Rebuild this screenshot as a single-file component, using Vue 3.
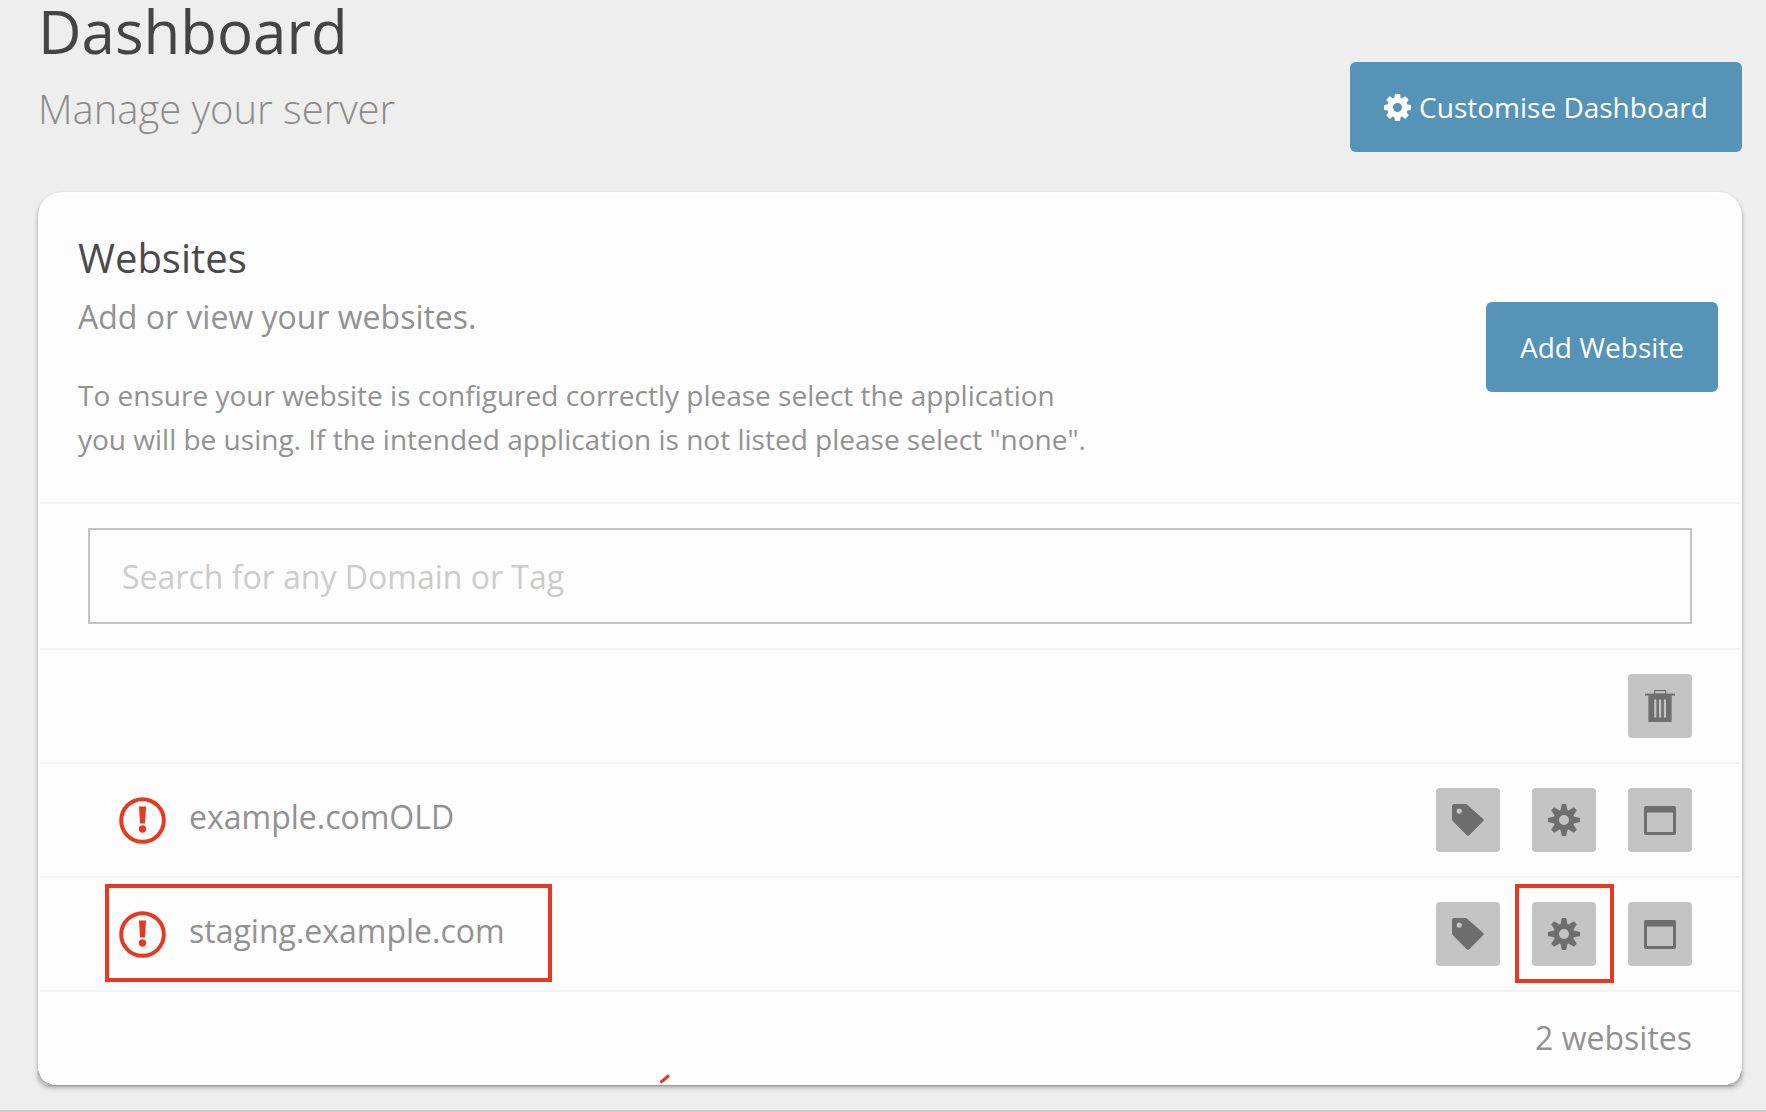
<script setup>
const sites = [
  { name: 'example.comOLD', flagged: false },
  { name: 'staging.example.com', flagged: true },
]
const teeth = [0, 45, 90, 135, 180, 225, 270, 315]
const cog = 'M1024 768q0-106-75-181t-181-75-181 75-75 181 75 181 181 75 181-75 75-181zm512-109v222q0 12-8 23t-20 13l-185 28q-19 54-39 91 35 50 107 138 10 12 10 25t-9 23q-27 37-99 108t-94 71q-12 0-26-9l-138-108q-44 23-91 38-16 136-29 186-7 28-36 28h-222q-14 0-24.500-8.500t-11.500-21.500l-28-184q-49-16-90-37l-141 107q-10 9-25 9-14 0-25-11-126-114-165-168-7-10-7-23 0-12 8-23 15-21 51-66.500t54-70.500q-27-50-41-99l-183-27q-13-2-21-12.500t-8-23.500v-222q0-12 8-23t19-13l186-28q14-46 39-92-40-57-107-138-10-12-10-24 0-10 9-23 26-36 98.500-107.500t94.500-71.500q13 0 26 10l138 107q44-23 91-38 16-136 29-186 7-28 36-28h222q14 0 24.500 8.500t11.500 21.500l28 184q49 16 90 37l142-107q9-9 24-9 13 0 25 10 129 119 165 170 7 8 7 22 0 12-8 23-15 21-51 66.500t-54 70.500q26 50 41 98l183 28q13 2 21 12.500t8 23.500z'
</script>

<template>
  <div class="page">
    <header class="top">
      <div>
        <h1 class="title">Dashboard</h1>
        <p class="subtitle">Manage your server</p>
      </div>
      <button class="btn customise">
        <svg class="cog" viewBox="0 0 1536 1536"><path :d="cog" fill="#fff" /></svg>
        Customise Dashboard
      </button>
    </header>

    <section class="card">
      <div class="head">
        <div>
          <h2 class="card-title">Websites</h2>
          <p class="lead">Add or view your websites.</p>
          <p class="note">To ensure your website is configured correctly please select the application<br />you will be using. If the intended application is not listed please select "none".</p>
        </div>
        <button class="btn add">Add Website</button>
      </div>

      <div class="search-row">
        <input class="search" type="text" placeholder="Search for any Domain or Tag" />
      </div>

      <div class="row tools">
        <button class="icon-btn" aria-label="Delete">
          <svg width="30" height="32" viewBox="0 0 30 32">
            <rect x="0" y="3.600" width="30" height="2" fill="#6e6e6e" />
            <rect x="9.600" y="0.600" width="11" height="3.600" fill="none" stroke="#6e6e6e" stroke-width="1.200" />
            <path d="M3.400 5h23.200v26.400a.6.6 0 0 1-.6.6H4a.6.6 0 0 1-.6-.6z" fill="#6e6e6e" />
            <rect x="9.200" y="9.500" width="2.200" height="18" fill="#c4c4c4" />
            <rect x="14" y="9.500" width="2.200" height="18" fill="#c4c4c4" />
            <rect x="18.800" y="9.500" width="2.200" height="18" fill="#c4c4c4" />
          </svg>
        </button>
      </div>

      <div v-for="site in sites" :key="site.name" class="row site">
        <div class="site-name">
          <span v-if="site.flagged" class="mark mark-name"></span>
          <svg class="alert" width="47" height="47" viewBox="0 0 47 47">
            <circle cx="23.500" cy="23.500" r="21.300" fill="none" stroke="#e8391f" stroke-width="4" />
            <path d="M20 9.500h7l-1 17h-5z" fill="#e8391f" />
            <circle cx="23.500" cy="32" r="3.700" fill="#e8391f" />
          </svg>
          <span class="domain">{{ site.name }}</span>
        </div>
        <div class="actions">
          <button class="icon-btn" aria-label="Tags">
            <svg width="32" height="32" viewBox="0 0 32 32">
              <path fill-rule="evenodd" d="M2 0h11.500a2 2 0 0 1 1.400.6L31.300 15a1.500 1.500 0 0 1 0 2L17 31.400a1.500 1.500 0 0 1-2 0L.6 17a2 2 0 0 1-.6-1.400V2a2 2 0 0 1 2-2zM7.200 4.500a2.600 2.600 0 1 0 0 5.200 2.600 2.600 0 0 0 0-5.200z" fill="#6e6e6e" />
            </svg>
          </button>
          <button class="icon-btn gear-btn" aria-label="Settings">
            <span v-if="site.flagged" class="mark mark-gear"></span>
            <svg width="32" height="32" viewBox="0 0 32 32">
              <g fill="#6e6e6e">
                <path v-for="a in teeth" :key="a" d="M13.900 0h4.200l1.700 7.500h-7.600z" :transform="`rotate(${a} 16 16)`" />
              </g>
              <path fill-rule="evenodd" d="M16 5.700a10.300 10.300 0 1 0 0 20.600 10.300 10.300 0 0 0 0-20.600zM16 11a5 5 0 1 1 0 10 5 5 0 0 1 0-10z" fill="#6e6e6e" />
            </svg>
          </button>
          <button class="icon-btn" aria-label="Open">
            <svg width="32" height="29" viewBox="0 0 32 29">
              <path fill-rule="evenodd" d="M2 0h28a2 2 0 0 1 2 2v25a2 2 0 0 1-2 2H2a2 2 0 0 1-2-2V2a2 2 0 0 1 2-2zM3 6.500v19.500h26V6.500z" fill="#6e6e6e" />
            </svg>
          </button>
        </div>
      </div>

      <div class="foot">2 websites</div>
      <svg class="stray" width="12" height="10" viewBox="0 0 12 10"><path d="M1.500 8.500L10 1.500" stroke="#e8391f" stroke-width="3" /></svg>
    </section>

    <div class="strip"></div>
  </div>
</template>

<style>
html, body { margin: 0; background: #eeeeee; }
</style>

<style scoped>
.page {
  height: 1112px;
  overflow: hidden;
  display: flex;
  flex-direction: column;
  padding-left: 38px;
  padding-right: 24px;
  box-sizing: border-box;
  position: relative;
  background: #eeeeee;
  font-family: "Open Sans", "Liberation Sans", sans-serif;
}
.top {
  display: flex;
  justify-content: space-between;
  align-items: flex-start;
  height: 192px;
}
.title {
  margin: 0;
  font-size: 60px;
  line-height: 62px;
  font-weight: 400;
  color: #444;
}
.subtitle {
  margin: 22px 0 0;
  font-size: 40px;
  line-height: 50px;
  font-weight: 300;
  color: #8c8c8c;
}
.btn {
  border: 0;
  border-radius: 6px;
  background: #5593b7;
  color: #fff;
  font: inherit;
  font-size: 28px;
  height: 90px;
  display: flex;
  align-items: center;
  justify-content: center;
  box-sizing: border-box;
  padding: 0;
}
.customise {
  margin-top: 62px;
  width: 392px;
  gap: 8px;
}
.cog { width: 27px; height: 27px; }
.add { width: 232px; flex: none; }
.card {
  position: relative;
  height: 893px;
  flex: none;
  box-sizing: border-box;
  border: 2px solid #fff;
  border-radius: 24px 24px 13px 13px;
  background: #fdfdfd;
  box-shadow: 0 1px 2px rgba(0, 0, 0, 0.22), 0 3px 5px rgba(0, 0, 0, 0.25);
}
.card::before,
.card::after {
  content: "";
  position: absolute;
  bottom: -2px;
  width: 14px;
  height: 14px;
}
.card::before {
  left: -2px;
  background: radial-gradient(circle at 100% 0, transparent 12.5px, #b0b0b0 13px, #d8d8d8 17px, #e4e4e4 20px);
}
.card::after {
  right: -2px;
  background: radial-gradient(circle at 0 0, transparent 12.5px, #b0b0b0 13px, #d8d8d8 17px, #e4e4e4 20px);
}
.head {
  height: 308px;
  display: flex;
  align-items: center;
  justify-content: space-between;
  padding: 0 22px 2px 38px;
  box-sizing: border-box;
}
.card-title {
  margin: 0;
  font-size: 40px;
  line-height: 50px;
  font-weight: 400;
  color: #4a4a4a;
}
.lead {
  margin: 12px 0 0;
  font-size: 32px;
  line-height: 44px;
  color: #929292;
}
.note {
  margin: 34px 0 0;
  font-size: 28px;
  line-height: 44px;
  color: #929292;
}
.search-row {
  border-top: 2px solid #f3f3f3;
  height: 146px;
  box-sizing: border-box;
  padding: 24px 48px 0;
}
.search {
  display: block;
  width: 100%;
  height: 96px;
  box-sizing: border-box;
  border: 2px solid #c4c4c4;
  background: transparent;
  padding: 0 32px;
  font: inherit;
  font-size: 32px;
  outline: none;
  border-radius: 0;
}
.search::placeholder { color: #cccccc; opacity: 1; }
.row {
  height: 114px;
  box-sizing: border-box;
  border-top: 2px solid #f3f3f3;
  display: flex;
  align-items: center;
  justify-content: space-between;
  padding: 0 48px 0 79px;
}
.tools { justify-content: flex-end; }
.site-name {
  position: relative;
  display: flex;
  align-items: center;
  gap: 23px;
}
.alert { flex: none; }
.domain {
  font-size: 32px;
  color: #929292;
  position: relative;
  top: -4px;
}
.actions { display: flex; gap: 32px; }
.icon-btn {
  position: relative;
  width: 64px;
  height: 64px;
  border: 0;
  padding: 0;
  border-radius: 4px;
  background: #c4c4c4;
  display: flex;
  align-items: center;
  justify-content: center;
}
.mark {
  position: absolute;
  border: 4px solid #e8391f;
  box-sizing: border-box;
  pointer-events: none;
}
.mark-name {
  left: -14px;
  top: -27px;
  width: 447px;
  height: 98px;
}
.mark-gear {
  left: -17px;
  top: -18px;
  width: 99px;
  height: 99px;
}
.foot {
  border-top: 2px solid #f3f3f3;
  padding: 24px 48px 0 0;
  text-align: right;
  font-size: 32px;
  line-height: 44px;
  color: #929292;
}
.stray { position: absolute; left: 619px; bottom: -1px; }
.strip {
  position: absolute;
  left: 0;
  right: 0;
  bottom: 0;
  height: 2px;
  background: #cccccc;
}
</style>
